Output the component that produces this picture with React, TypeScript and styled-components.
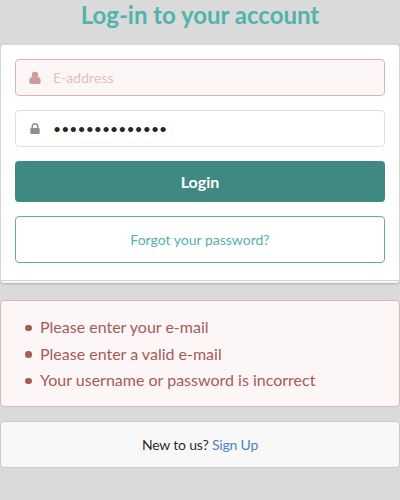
import React from "react";
import styled, { createGlobalStyle } from "styled-components";

const GlobalStyle = createGlobalStyle`
  *, *::before, *::after { box-sizing: border-box; }
  body { margin: 0; background: #dadada; font-family: Lato, "Liberation Sans", sans-serif; font-size: 14px; line-height: 20px; color: rgba(0,0,0,.87); }
`;
const Page = styled.main`
  width: 400px;
  height: 500px;
  overflow: hidden;
`;
const Title = styled.h2`
  margin: 0 0 14px;
  height: 30px;
  line-height: 30px;
  font-size: 24px;
  letter-spacing: -.02px;
  font-weight: 700;
  text-align: center;
  color: #51b3ab;
`;
const Form = styled.form` margin: 0; `;
const Panel = styled.section`
  height: 239px;
  padding: 14px 14px 0;
  background: #fff;
  border: 1px solid #d7d7d8;
  border-bottom: 0;
  border-radius: 4px;
  box-shadow: 0 1px 2px rgba(34,36,38,.25);
  display: flex;
  flex-direction: column;
  gap: 14px;
`;
const PanelEdge = styled.div`
  flex: none;
  height: 3px;
  margin: auto -14px 0;
  border-top: 1px solid #d4d4d5;
  border-radius: 0 0 4px 4px;
  background: #f8f8f8;
`;
const Field = styled.label<{ $error?: boolean }>`
  display: flex;
  align-items: center;
  height: 37px;
  flex: none;
  padding-left: 12px;
  gap: 11px;
  border-radius: 4px;
  border: 1px solid ${p => (p.$error ? "#dbb5b4" : "#dededf")};
  background: ${p => (p.$error ? "#fcf6f6" : "#fff")};
  color: ${p => (p.$error ? "#cb9c99" : "#8f8f8f")};
`;
const Input = styled.input`
  flex: 1;
  min-width: 0;
  border: 0;
  outline: 0;
  padding: 0;
  background: transparent;
  font: inherit;
  letter-spacing: .04px;
  color: rgba(0,0,0,.87);
  &::placeholder { color: #e3bfbd; opacity: 1; }
`;
const Button = styled.button<{ $primary?: boolean }>`
  flex: none;
  height: ${p => (p.$primary ? 41 : 47)}px;
  border-radius: 4px;
  font-family: inherit;
  padding: 0;
  font-size: ${p => (p.$primary ? 16 : 14)}px;
  font-weight: ${p => (p.$primary ? 700 : 400)};
  border: ${p => (p.$primary ? "0" : "1px solid #51b3ab")};
  background: ${p => (p.$primary ? "#3e8a83" : "#fff")};
  color: ${p => (p.$primary ? "#fff" : "#51b3ab")};
`;
const Errors = styled.ul`
  height: 107px;
  margin: 17px 0 14px;
  padding: 13px 0 0 24px;
  list-style: none;
  border: 1px solid #dbb5b4;
  border-radius: 4px;
  background: #fcf6f6;
  color: #a65b57;
  font-size: 16px;
  line-height: 26.5px;
`;
const ErrorItem = styled.li`
  display: flex;
  align-items: center;
  gap: 8.5px;
  &::before { content: ""; width: 6.5px; height: 6.5px; margin-top: 1px; border-radius: 50%; background: currentColor; }
`;
const Signup = styled.footer`
  height: 47px;
  line-height: 46px;
  letter-spacing: -.2px;
  border: 1px solid #c9c9ca;
  border-radius: 4px;
  background: #f8f8f8;
  text-align: center;
`;
const Link = styled.a`
  color: #4d82c6;
  text-decoration: none;
`;
const Icon = styled.svg`
  width: 14px;
  height: 14px;
  flex: none;
  fill: currentColor;
`;

export default function App() {
  return (
    <Page>
      <GlobalStyle />
      <Title>Log-in to your account</Title>
      <Form onSubmit={e => e.preventDefault()}>
        <Panel>
          <Field $error>
            <Icon viewBox="0 0 14 14">
              <circle cx="7" cy="4" r="3.200" />
              <path d="M4 6.100c1.800 1.500 4.200 1.500 6 0 2.200.1 2.700 2.300 2.700 4.700 0 1.400-.8 2.200-2 2.200H3.300c-1.200 0-2-.8-2-2.200C1.300 8.400 1.800 6.200 4 6.100Z" />
            </Icon>
            <Input placeholder="E-address" />
          </Field>
          <Field>
            <Icon viewBox="0 0 14 14">
              <path fillRule="evenodd" d="M3.500 6.100V4.500a3.500 3.500 0 0 1 7 0V6.100h.4c.5 0 .75.250.75.750v4.500c0 .5-.250.750-.750.750h-7.800c-.5 0-.750-.250-.750-.750v-4.500c0-.5.250-.750.750-.750ZM5 6.100h4V4.500a2 2 0 0 0-4 0Z" />
            </Icon>
            <Input type="password" defaultValue="12345678901234" />
          </Field>
          <Button $primary type="submit">Login</Button>
          <Button type="button">Forgot your password?</Button>
          <PanelEdge />
        </Panel>
        <Errors>
          <ErrorItem>Please enter your e-mail</ErrorItem>
          <ErrorItem>Please enter a valid e-mail</ErrorItem>
          <ErrorItem>Your username or password is incorrect</ErrorItem>
        </Errors>
      </Form>
      <Signup>New to us? <Link>Sign Up</Link></Signup>
    </Page>
  );
}
